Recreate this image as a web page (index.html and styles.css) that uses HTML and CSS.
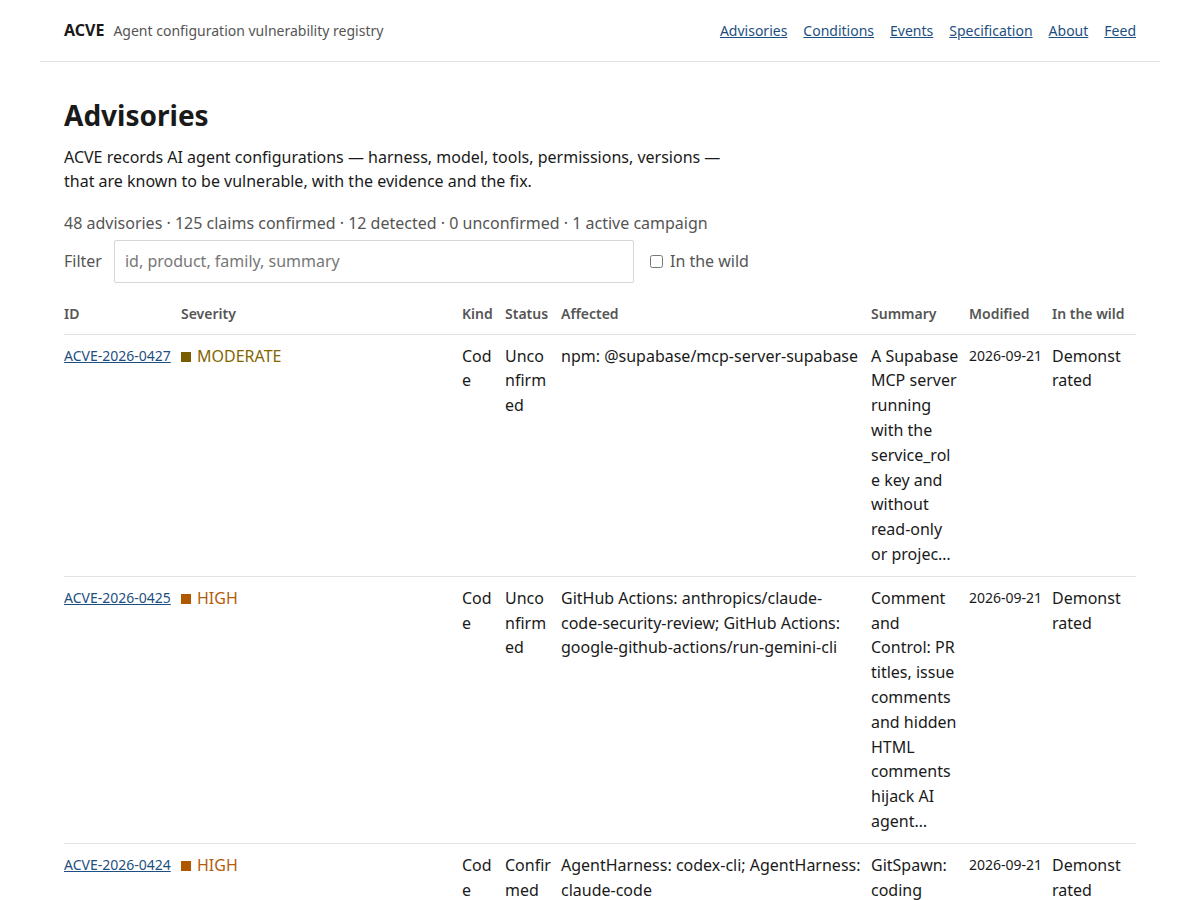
FILE: index.html
```html
<!DOCTYPE html>
<html lang="en">
<head>
    <meta charset="UTF-8">
    <meta name="viewport" content="width=device-width, initial-scale=1.0">
    <title>Advisories · ACVE</title>
    <link rel="stylesheet" href="styles.css">
</head>
<body>
    <div class="page">
        <header class="site-header">
            <div class="brand">
                <span class="brand-name">ACVE</span>
                <span class="brand-tag">Agent configuration vulnerability registry</span>
            </div>
            <nav class="site-nav">
                <a href="#">Advisories</a>
                <a href="#">Conditions</a>
                <a href="#">Events</a>
                <a href="#">Specification</a>
                <a href="#">About</a>
                <a href="#">Feed</a>
            </nav>
        </header>

        <main class="content">
            <h1>Advisories</h1>
            <p class="intro">ACVE records AI agent configurations — harness, model, tools, permissions, versions — that are known to be vulnerable, with the evidence and the fix.</p>
            <p class="stats">48 advisories · 125 claims confirmed · 12 detected · 0 unconfirmed · 1 active campaign</p>

            <div class="filter-row">
                <label class="filter-label" for="filter">Filter</label>
                <input type="text" id="filter" placeholder="id, product, family, summary">
                <label class="wild-toggle"><input type="checkbox" id="wild"> In the wild</label>
            </div>

            <table class="advisories">
                <colgroup>
                    <col class="c-id">
                    <col class="c-sev">
                    <col class="c-kind">
                    <col class="c-status">
                    <col class="c-affected">
                    <col class="c-summary">
                    <col class="c-modified">
                    <col class="c-wild">
                </colgroup>
                <thead>
                    <tr>
                        <th>ID</th>
                        <th>Severity</th>
                        <th>Kind</th>
                        <th>Status</th>
                        <th>Affected</th>
                        <th>Summary</th>
                        <th>Modified</th>
                        <th>In the wild</th>
                    </tr>
                </thead>
                <tbody>
                    <tr>
                        <td class="id"><a href="#">ACVE-2026-0427</a></td>
                        <td><span class="sev sev-moderate">MODERATE</span></td>
                        <td>Code</td>
                        <td>Unconfirmed</td>
                        <td>npm: @supabase/mcp-server-supabase</td>
                        <td class="summary">A Supabase MCP server running with the service_role key and without read-only or projec…</td>
                        <td class="date">2026-09-21</td>
                        <td class="wild">Demonstrated</td>
                    </tr>
                    <tr>
                        <td class="id"><a href="#">ACVE-2026-0425</a></td>
                        <td><span class="sev sev-high">HIGH</span></td>
                        <td>Code</td>
                        <td>Unconfirmed</td>
                        <td>GitHub Actions: anthropics/claude-code-security-review; GitHub Actions: google-github-actions/run-gemini-cli</td>
                        <td class="summary">Comment and Control: PR titles, issue comments and hidden HTML comments hijack AI agent…</td>
                        <td class="date">2026-09-21</td>
                        <td class="wild">Demonstrated</td>
                    </tr>
                    <tr>
                        <td class="id"><a href="#">ACVE-2026-0424</a></td>
                        <td><span class="sev sev-high">HIGH</span></td>
                        <td>Code</td>
                        <td>Confirmed</td>
                        <td>AgentHarness: codex-cli; AgentHarness: claude-code</td>
                        <td class="summary">GitSpawn: coding agents that clone a repository run its hooks with the user's…</td>
                        <td class="date">2026-09-21</td>
                        <td class="wild">Demonstrated</td>
                    </tr>
                </tbody>
            </table>
        </main>
    </div>
</body>
</html>
```

FILE: styles.css
```css
* { margin: 0; padding: 0; box-sizing: border-box; }
body {
    font-family: 'Noto Sans', 'Open Sans', sans-serif;
    font-size: 16px;
    line-height: 1.55;
    color: #1a1a1a;
    background: #fff;
}
a { color: #1d4f80; }

.page {
    max-width: 1120px;
    margin: 0 auto;
}

/* top bar */
.site-header {
    height: 62px;
    padding: 0 24px;
    display: flex;
    align-items: center;
    justify-content: space-between;
    border-bottom: 1px solid #e2e2e2;
}
.brand { display: flex; align-items: baseline; gap: 9px; }
.brand-name { font-weight: 700; font-size: 16px; }
.brand-tag { font-size: 14px; color: #555; }
.site-nav { display: flex; gap: 16px; font-size: 14px; }

/* page body */
.content { padding: 37px 24px 40px; }
h1 {
    font-size: 28px;
    font-weight: 700;
    line-height: 1.2;
    margin-bottom: 12px;
}
.intro { max-width: 42em; }
.stats { color: #555; margin-top: 17px; }

.filter-row {
    display: flex;
    align-items: center;
    gap: 12px;
    margin-top: 4px;
}
.filter-label { color: #555; }
#filter {
    width: 520px;
    height: 43px;
    padding: 0 10px;
    border: 1px solid #d6d6d6;
    border-radius: 2px;
    font: inherit;
    color: #1a1a1a;
}
#filter::placeholder { color: #777; }
.wild-toggle {
    display: inline-flex;
    align-items: center;
    gap: 4px;
    margin-left: 4px;
    color: #555;
}
.wild-toggle input { margin: 0 3px 0 0; width: 13px; height: 13px; }

/* advisory table */
.advisories {
    width: 100%;
    margin-top: 12px;
    border-collapse: collapse;
    table-layout: fixed;
}
.c-id { width: 117px; }
.c-sev { width: 281px; }
.c-kind { width: 43px; }
.c-status { width: 56px; }
.c-affected { width: 310px; }
.c-summary { width: 98px; }
.c-modified { width: 83px; }
.c-wild { width: 84px; }

.advisories th {
    text-align: left;
    font-size: 14px;
    font-weight: 600;
    color: #555;
    padding: 8px 8px 9px 0;
    border-bottom: 1px solid #e2e2e2;
}
.advisories td {
    vertical-align: top;
    padding: 9px 8px 9px 0;
    border-bottom: 1px solid #e2e2e2;
    overflow-wrap: anywhere;
}
.advisories td.summary, .advisories td.wild { padding-right: 10px; }
.advisories td.id, .advisories td.date { font-size: 14px; line-height: 1.5; padding-top: 10px; }
.advisories td.date { white-space: nowrap; }

.sev::before {
    content: '';
    display: inline-block;
    width: 10px;
    height: 10px;
    margin-right: 6px;
    background: currentColor;
}
.sev-moderate { color: #846600; }
.sev-moderate::before { background: #7a5c00; }
.sev-high { color: #b35c0c; }
.sev-high::before { background: #b05800; }
```
